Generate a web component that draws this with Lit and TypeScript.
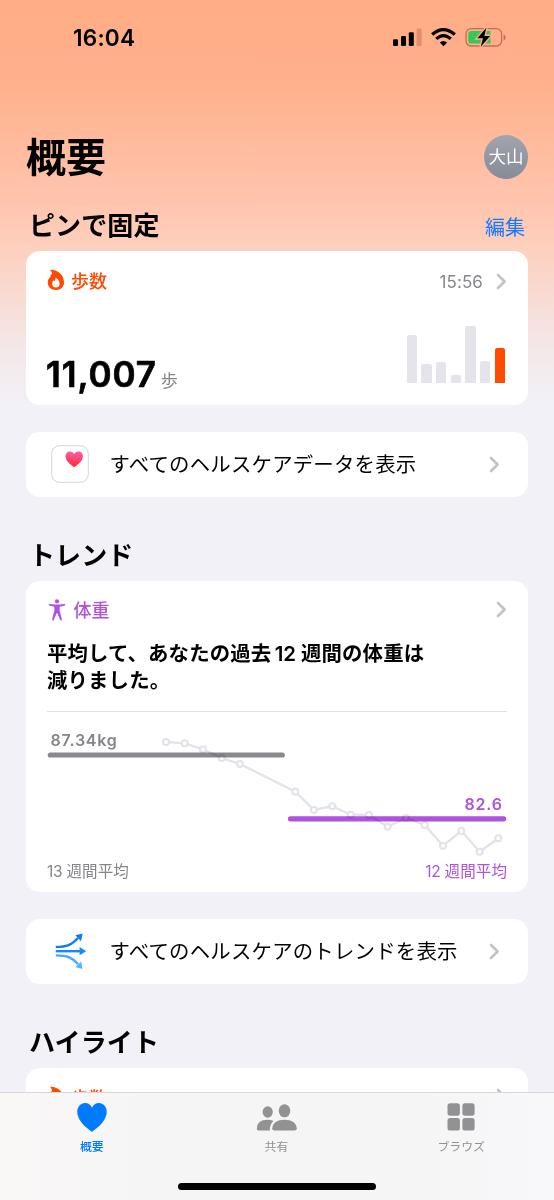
import { LitElement, html, css, svg } from "lit";
import { customElement, property } from "lit/decorators.js";

const chevron = html`<svg class="chev" width="11" height="17" viewBox="0 0 11 17" style="display:block">
  <path d="M2 2 L8.6 8.5 L2 15" fill="none" stroke="#c2c2c6" stroke-width="2.6" stroke-linecap="round" stroke-linejoin="round" />
</svg>`;

const flame = html`<svg class="flame" width="18" height="22" viewBox="0 0 18 22">
  <path fill-rule="evenodd" fill="#ff4a00" d="M3 .7 C9.5 0 17 5 17 13.2 C17 18.1 13.6 21.1 8.8 21.1 C4 21.1 .8 18 .8 13.6 C.8 10.8 2.2 9 3.6 7.6 L3.8 5.6 L5 5.4 C5.2 3.8 4.4 2.2 3 .7 Z M8.6 8.4 C8.8 10.8 8 11.4 7.2 12.6 C6.9 12.2 6.7 11.8 6.6 11.2 C5.6 12.4 5.2 13.4 5.2 14.9 C5.2 17.2 6.8 18.5 8.9 18.5 C11.1 18.5 12.6 17.2 12.6 14.9 C12.6 12 11.2 9.7 8.6 8.4 Z" />
</svg>`;

const HEART = "M50 92 C44 88 4 62 4 30 C4 14 15 3 28 3 C38 3 46 9 50 18 C54 9 62 3 72 3 C85 3 96 14 96 30 C96 62 56 88 50 92 Z";

@customElement("metric-card")
class MetricCard extends LitElement {
  @property() label = "";
  @property() time = "";
  @property() value = "";
  @property() unit = "";

  static styles = css`
    :host { display: block; height: 154px; background: #fff; border-radius: 14px; box-sizing: border-box; padding: 18px 21px 0; }
    .top { display: flex; align-items: center; height: 26px; }
    .name { font-size: 18px; font-weight: 500; color: #ff4a00; margin-left: 6px; flex: 1; line-height: 25px; margin-bottom: 1px; }
    .time { font-size: 17px; color: #85858a; margin-right: 13px; line-height: 26px; letter-spacing: 0.1px; }
    .top svg { flex: none; }
    .chev { margin-bottom: 1px; }
    .brief .chev { margin-bottom: 5px; }
    .brief .name { margin-bottom: 2px; }
    .flame { display: block; margin-bottom: 5px; }
    .bottom { display: flex; justify-content: space-between; height: 88px; align-items: flex-end; }
    .figure { display: flex; align-items: baseline; line-height: 40px; margin-bottom: -4.5px; height: 34px; }
    .value { font-size: 35px; font-weight: 600; -webkit-text-stroke: 0.7px #000; stroke-linejoin: round; letter-spacing: 0.9px; margin-left: -1px; }
    .unit { font-size: 17px; color: #85858a; margin-left: 4px; font-weight: 400; }
    .bars { display: flex; align-items: flex-end; gap: 4.4px; margin-right: 2px; }
    .bar { width: 10.3px; border-radius: 2px 2px 0.5px 0.5px; background: #e4e4ea; }
    .bar.today { background: #ff4a00; }
  `;

  render() {
    const bars = [48.3, 19, 20.7, 7.7, 56.7, 21.7, 35.3];
    return html`
      <div class="top ${this.value ? "" : "brief"}">${flame}<div class="name">${this.label}</div><div class="time">${this.time}</div>${chevron}</div>
      ${this.value
        ? html`<div class="bottom">
            <div class="figure"><span class="value">${this.value}</span><span class="unit">${this.unit}</span></div>
            <div class="bars">
              ${bars.map((h, i) => html`<div class="bar ${i === bars.length - 1 ? "today" : ""}" style="height:${h}px"></div>`)}
            </div>
          </div>`
        : ""}
    `;
  }
}

@customElement("link-row")
class LinkRow extends LitElement {
  @property() label = "";
  static styles = css`
    :host { display: flex; align-items: center; height: 65px; background: #fff; border-radius: 14px; box-sizing: border-box; padding: 0 28px 0 25px; }
    .icon { width: 38px; height: 38px; flex: none; }
    .label { flex: 1; font-size: 20.4px; letter-spacing: 0.22px; margin-left: 20.5px; white-space: nowrap; line-height: 30px; padding-top: 1px; }
    svg { flex: none; }
  `;
  render() {
    return html`<div class="icon"><slot></slot></div><div class="label">${this.label}</div>${chevron}`;
  }
}

@customElement("trend-card")
class TrendCard extends LitElement {
  static styles = css`
    :host { display: block; height: 311px; background: #fff; border-radius: 14px; box-sizing: border-box; padding: 16px 21px 0; }
    .top { display: flex; align-items: center; height: 26px; }
    .name { font-size: 18px; font-weight: 500; color: #af52de; margin-left: 8.4px; flex: 1; line-height: 26px; padding-top: 2px; }
    .person { margin-left: 1px; margin-right: -1px; }
    .chev { margin-bottom: 2px; }
    .summary { margin-top: 18px; font-size: 20.4px; font-weight: 600; letter-spacing: 0.15px; line-height: 26.5px; white-space: nowrap; height: 71px; box-sizing: border-box; border-bottom: 1.3px solid #e2e2e5; }
    .num { margin: 0 5px 0 3.5px; letter-spacing: -0.1px; }
    .chart { display: block; }
    .legend { display: flex; justify-content: space-between; font-size: 15.5px; line-height: 24px; color: #85858a; letter-spacing: 0.1px; }
    .now { color: #af52de; }
    .legend .num { margin: 0 4px 0 0; letter-spacing: -0.2px; }
    .reading { font-size: 16px; font-weight: 600; letter-spacing: 0.75px; }
    .mean { mix-blend-mode: multiply; }
  `;
  render() {
    const pts = [[166, 742], [184.7, 743.3], [203, 749.3], [221.7, 758], [240, 764], [295.3, 791.7], [314, 810], [332.3, 806.3], [350.7, 814.7], [369, 815], [387.7, 826.7], [406, 818], [424.7, 825], [443, 845.7], [461.3, 831], [479.7, 851.7], [498.3, 838.3]];
    return html`
      <div class="top">
        <svg class="person" width="18" height="22" viewBox="0 0 18 22">
          <g fill="#af52de">
            <circle cx="9" cy="2.4" r="2.1" />
            <path d="M1 5.1 L6.6 5.4 L11.4 5.4 L17 5.1 Q17.7 6 16.9 6.6 L11.8 7.7 L11.6 11.5 L14 20.8 Q13.4 21.9 12.4 21.3 L9.2 14 L8.8 14 L5.6 21.3 Q4.6 21.9 4 20.8 L6.4 11.5 L6.2 7.7 L1.1 6.6 Q.3 6 1 5.1 Z" />
          </g>
        </svg>
        <div class="name">体重</div>${chevron}
      </div>
      <div class="summary">平均して、あなたの過去<span class="num">12</span>週間の体重は<br />減りました。</div>
      <svg class="chart" width="460" height="148" viewBox="47 712 460 148">
        <polyline points=${pts.map((p) => p.join(",")).join(" ")} fill="none" stroke="#e3e2e9" stroke-width="2.3" />
        ${pts.map(([x, y]) => svg`<circle cx=${x} cy=${y} r="3" fill="#fff" stroke="#e3e2e9" stroke-width="2.1" />`)}
        <line class="mean" x1="50.3" x2="282.3" y1="755" y2="755" stroke="#8a8a8e" stroke-width="5.2" stroke-linecap="round" />
        <line class="mean" x1="290.5" x2="503.7" y1="818.8" y2="818.8" stroke="#af52de" stroke-width="5.2" stroke-linecap="round" />
        <text class="reading" x="50.5" y="746" fill="#85858a">87.34kg</text>
        <text class="reading" x="502.7" y="809.5" text-anchor="end" fill="#af52de">82.6</text>
      </svg>
      <div class="legend"><div><span class="num">13</span>週間平均</div><div class="now"><span class="num">12</span>週間平均</div></div>
    `;
  }
}

@customElement("app-root")
class AppRoot extends LitElement {
  static styles = css`
    :host {
      display: block; position: relative; width: 554px; height: 1200px; overflow: hidden; color: #000;
      font-family: Inter, "Noto Sans CJK JP", sans-serif;
      background: linear-gradient(#ffad86 0, #ffaf8a 70px, #ffb592 110px, #ffbc9f 150px, #ffc4ad 200px, #fed0bf 250px, #f8dcd4 300px, #f4e8e9 350px, #f2f1f7 405px);
    }
    .status { display: flex; justify-content: space-between; height: 76px; padding: 0 48px 0 73px; align-items: center; box-sizing: border-box; }
    .clock { font-size: 22.6px; font-weight: 600; line-height: 30px; letter-spacing: 0.2px; }
    .signals { display: block; }
    .title { display: flex; justify-content: space-between; align-items: center; height: 60px; margin-top: 51px; padding: 0 26px; }
    h1 { margin: 0; font-size: 40px; font-weight: 700; line-height: 60px; padding-top: 2px; }
    .avatar { width: 44px; height: 44px; border-radius: 50%; background: linear-gradient(#a0a5b1, #868b96); color: #fff; font-size: 17.5px; font-weight: 400; line-height: 43px; text-align: center; }
    .section { display: flex; justify-content: space-between; align-items: center; height: 36px; padding: 0 29px; }
    h2 { margin: 0; font-size: 26px; font-weight: 700; line-height: 36px; padding-top: 2px; letter-spacing: 0.1px; }
    .edit { font-size: 20px; color: #147aff; line-height: 36px; padding-top: 6px; }
    .pinned { margin-top: 20px; }
    main { display: flex; flex-direction: column; }
    .body { margin: 0 26px; }
    .s1 { margin-top: 8px; }
    .gap { margin-top: 26.5px; }
    .trend { margin-top: 40px; }
    .after { margin-top: 8.5px; }
    .tabs { position: absolute; left: 0; right: 0; bottom: 0; height: 108px; box-sizing: border-box; border-top: 1px solid #d8d8da; background: linear-gradient(90deg, #faf7f7, #f5f5f5 30%, #f5f5f5 75%, #f8f8fb); display: flex; flex-direction: column; align-items: center; justify-content: space-between; }
    .items { display: grid; grid-template-columns: repeat(3, 1fr); width: 100%; margin-left: -1px; }
    .tab { display: flex; flex-direction: column; align-items: center; color: #929294; font-size: 11.9px; font-weight: 400; line-height: 18px; padding-top: 9px; }
    .tab svg { display: block; margin-bottom: 6px; }
    .tab.on { color: #007aff; font-weight: 500; }
    .home { width: 198px; height: 6.5px; border-radius: 4px; background: #000; margin: 0 0 10.5px; }
    .app { display: block; box-sizing: border-box; }
  `;

  render() {
    return html`
      <div class="status">
        <div class="clock">16:04</div>
        <svg class="signals" width="114" height="24" viewBox="392 26 114 24">
          <rect x="393" y="39.3" width="5" height="6.7" rx="1.3" /><rect x="401" y="36" width="5" height="10" rx="1.3" /><rect x="408.8" y="32.2" width="5" height="13.8" rx="1.3" /><rect x="416.6" y="28.6" width="5" height="17.4" rx="1.3" fill="#e08f72" />
          <g fill="none" stroke="#000" stroke-width="3.3"><path d="M432.2 34.6 Q443.5 24.6 454.8 34.6" /><path d="M436.2 38.9 Q443.5 32.3 450.8 38.9" /></g>
          <path d="M439.8 42.6 Q443.5 39.4 447.2 42.6 L443.5 46.2 Z" />
          <rect x="466" y="28.6" width="35.6" height="17.4" rx="5.2" fill="none" stroke="#bb7155" stroke-width="1.3" />
          <path d="M503.6 34.3 Q505.6 35 505.6 37.4 Q505.6 39.8 503.6 40.5 Z" fill="#bb7155" />
          <path d="M471.5 31 H490.5 V43.6 H471.5 Q468.3 43.6 468.3 40.4 V34.2 Q468.3 31 471.5 31 Z" fill="#34c759" />
          <path d="M486.3 27.8 L477.3 38.3 H483 L480.7 46.8 L490.2 36 H484.4 Z" fill="#000" stroke="#ffb08a" stroke-width="2.8" paint-order="stroke" />
        </svg>
      </div>
      <main>
        <div class="title"><h1>概要</h1><div class="avatar">大山</div></div>
        <div class="section pinned"><h2>ピンで固定</h2><div class="edit">編集</div></div>
        <metric-card class="body s1" label="歩数" time="15:56" value="11,007" unit="歩"></metric-card>
        <link-row class="body gap" label="すべてのヘルスケアデータを表示">
          <svg class="app" width="38" height="38" viewBox="0 0 38 38">
            <defs><linearGradient id="pink" x2="0" y2="1"><stop stop-color="#ff5fa8" /><stop offset="1" stop-color="#ff2a30" /></linearGradient></defs>
            <rect x=".7" y=".7" width="36.6" height="36.6" rx="8" fill="#fff" stroke="#d4d4d6" />
            <g transform="translate(13.7 6) scale(.19 .175)"><path d=${HEART} fill="url(#pink)" /></g>
          </svg>
        </link-row>
        <div class="section trend"><h2>トレンド</h2></div>
        <trend-card class="body after"></trend-card>
        <link-row class="body gap" label="すべてのヘルスケアのトレンドを表示">
          <svg class="app" width="38" height="38" viewBox="0 0 38 38">
            <g fill="none" stroke-width="2.4">
              <path d="M4.8 15 C16 15 20.5 13 27 6" stroke="#0a7cf5" /><path d="M4.8 19.2 H30" stroke="#168bf8" /><path d="M4.8 23.4 C16 23.4 20.5 25.4 27 32" stroke="#43a9f8" />
            </g>
            <path d="M31.7 1.5 L24.4 3.2 L30 9.2 Z" fill="#0a7cf5" /><path d="M35.2 19.2 L28.6 15.1 V23.3 Z" fill="#168bf8" /><path d="M31.5 37 L24.3 35 L30.1 29.6 Z" fill="#53b4fa" />
          </svg>
        </link-row>
        <div class="section trend"><h2>ハイライト</h2></div>
        <metric-card class="body after" label="歩数"></metric-card>
      </main>
      <nav class="tabs">
        <div class="items">
          <div class="tab on">
            <svg width="32" height="30" viewBox="0 0 100 93" preserveAspectRatio="none"><path d=${HEART} fill="#007aff" /></svg>概要
          </div>
          <div class="tab">
            <svg width="42" height="30" viewBox="0 0 42 30" fill="#929294">
              <ellipse cx="12.7" cy="10" rx="5.1" ry="5.8" /><path d="M1.8 27 Q1.8 17.8 12.6 17.8 Q16 17.8 18.6 19 Q14.7 22.3 14.8 28.4 H3.4 Q1.8 28.4 1.8 27 Z" />
              <ellipse cx="29.5" cy="8.8" rx="5.8" ry="6.5" /><path d="M17.2 26.6 Q17.8 17.7 29.5 17.7 Q41.2 17.7 41.8 26.6 Q41.8 28.4 40 28.4 H19 Q17.2 28.4 17.2 26.6 Z" />
            </svg>共有
          </div>
          <div class="tab">
            <svg width="28" height="30" viewBox="0 0 28 30" fill="#929294">
              <rect x=".5" y="1.3" width="12.4" height="12.4" rx="2.6" /><rect x="15.4" y="1.3" width="12.2" height="12.4" rx="2.6" /><rect x=".5" y="16.1" width="12.4" height="12.4" rx="2.6" /><rect x="15.4" y="16.1" width="12.2" height="12.4" rx="2.6" />
            </svg>ブラウズ
          </div>
        </div>
        <div class="home"></div>
      </nav>
    `;
  }
}
